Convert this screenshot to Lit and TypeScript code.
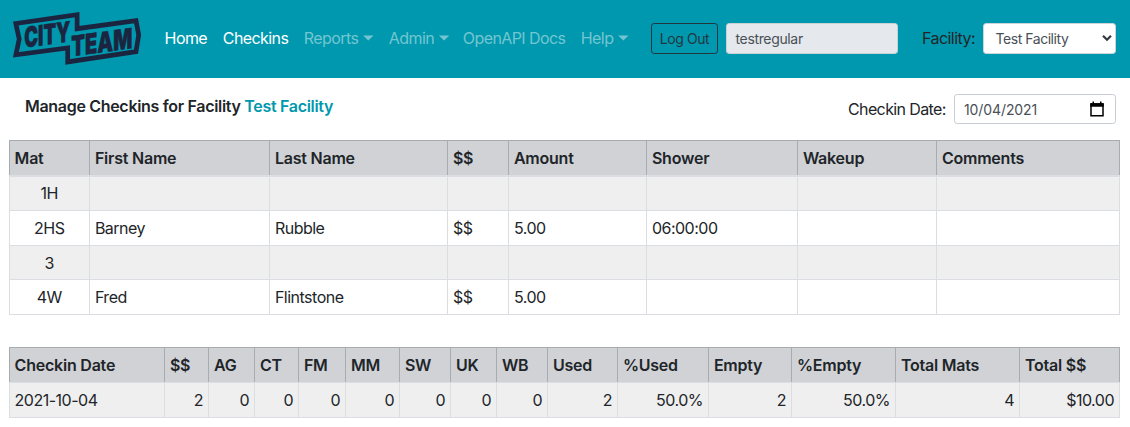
import { LitElement, html, css, svg } from "lit";
import { customElement, property } from "lit/decorators.js";

@customElement("city-logo")
class CityLogo extends LitElement {
  static styles = css`
    :host { display: block; width: 130px; height: 76px; }
    svg { display: block; overflow: visible; }
    .frame { fill: none; stroke: #1b2540; stroke-width: 4.7; stroke-linejoin: miter; }
    .word { font: 900 28px Inter, sans-serif; fill: #1b2540; stroke: #1b2540; stroke-width: 0.6; }
  `;
  render() {
    return html`<svg width="130" height="76" viewBox="12 0 130 76">
      ${svg`<path class="frame" d="M15.8 23.5 77.1 14.7V28.7L136 20.6 138.7 35 136 51.6 67.7 61.9V47.9L15.9 54.8 19.2 39Z"/>
      <text class="word" transform="matrix(1 -0.13 0 1 24.3 47.5)" x="0" y="0" textLength="46" lengthAdjust="spacingAndGlyphs">CITY</text>
      <text class="word" transform="matrix(1 -0.135 0 1 71.3 56.4)" x="0" y="0" textLength="61" lengthAdjust="spacingAndGlyphs">TEAM</text>`}
    </svg>`;
  }
}

@customElement("data-grid")
class DataGrid extends LitElement {
  @property({ attribute: false }) cols: number[] = [];
  @property({ attribute: false }) head: string[] = [];
  @property({ attribute: false }) rows: string[][] = [];
  @property({ attribute: false }) heights: number[] = [];
  @property({ reflect: true }) kind = "main";
  static styles = css`
    :host { display: block; width: 1111px; }
    .row { display: grid; box-sizing: border-box; }
    .cell {
      box-sizing: border-box; border-left: 1px solid #dadee2; border-bottom: 1px solid #dadee2;
      padding: 0 5px 0 4.9px; display: flex; align-items: center; white-space: nowrap; letter-spacing: -0.5px;
    }
    .cell:first-child { padding-left: 4.6px; }
    .cell:last-child { border-right: 1px solid #dadee2; }
    .odd { background: #efefef; }
    .head { background: #d0d2d6; border-top: 1px solid #a7acb1; font-weight: 600; }
    .head .cell { border-left-color: #a7acb1; border-bottom: 0; letter-spacing: -0.22px; }
    .head .cell:last-child { border-right-color: #a7acb1; }
    .rule { height: 1px; background: #dadee2; }
    :host([kind="main"]) .rule { height: 2px; }
    :host([kind="main"]) .row:not(.head) .cell:first-child { justify-content: center; }
    :host([kind="main"]) .rule + .odd .cell { line-height: 23px; padding-bottom: 1px; }
    :host([kind="sum"]) .row:not(.head) .cell:not(:first-child) { justify-content: flex-end; letter-spacing: -0.5px; }
  `;
  render() {
    const c = this.cols.map((n) => n + "px").join(" ");
    return html`
      <div class="row head" style="grid-template-columns:${c};height:35px">
        ${this.head.map((t) => html`<div class="cell">${t}</div>`)}
      </div>
      <div class="rule"></div>
      ${this.rows.map((r, i) => html`<div class="row ${i % 2 ? "" : "odd"}" style="grid-template-columns:${c};height:${this.heights[i]}px">
        ${r.map((t) => html`<div class="cell">${t}</div>`)}
      </div>`)}
    `;
  }
}

@customElement("app-root")
class AppRoot extends LitElement {
  static styles = css`
    :host { display: block; width: 1130px; height: 427px; overflow: hidden; background: #fff; color: #212529; font: 16px/24px Inter, sans-serif; }
    .nav { height: 78px; box-sizing: border-box; background: #0098ae; display: flex; align-items: center; padding: 0 14px 2px 12px; white-space: nowrap; }
    .links { display: flex; margin-left: 22.6px; width: 486.4px; letter-spacing: -0.58px; }
    .link { color: #73c6d1; display: flex; align-items: center; box-sizing: border-box; }
    .on { color: #fff; }
    .caret { width: 10.4px; height: 5.2px; background: currentColor; clip-path: polygon(0 0, 100% 0, 50% 100%); margin-left: 4.8px; }
    .btn, .input, .select, .date { box-sizing: border-box; height: 31px; border-radius: 3.2px; font-size: 14px; display: flex; align-items: center; }
    .btn { width: 67px; border: 1px solid #20373f; color: #20373f; justify-content: center; letter-spacing: -0.4px; padding-top: 2px; }
    .input { width: 172px; margin-left: 8px; background: #e5e8ec; border: 1px solid #cbd0d5; color: #495057; padding: 2px 9px 0 8.5px; letter-spacing: -0.35px; }
    .flabel { margin-left: 24px; width: 61px; letter-spacing: -0.55px; }
    .select { width: 133px; background: #fff; border: 1px solid #ced4da; color: #495057; padding: 0 3px 0 11.5px; justify-content: space-between; letter-spacing: -0.45px; }
    .select span { padding-top: 2px; }
    .bar { height: 62px; display: flex; padding: 0 14px 0 25px; justify-content: space-between; box-sizing: border-box; white-space: nowrap; }
    .title { padding-top: 16px; font-weight: 600; letter-spacing: -0.31px; }
    .title b { font-weight: 600; color: #0098ae; }
    .pick { display: flex; padding-top: 16px; }
    .pick .lab { width: 106px; line-height: 31px; letter-spacing: -0.62px; }
    .date { width: 162px; height: 30px; background: #fff; border: 1px solid #c8cdd3; color: #495057; padding: 0 11.5px 0 9px; justify-content: space-between; letter-spacing: -0.1px; }
    .date span { padding-top: 2px; }
    .tables { padding-left: 9px; display: flex; flex-direction: column; gap: 32px; }
    svg { display: block; }
  `;
  render() {
    const link = (t: string, w: number, on = false, drop = false) =>
      html`<a class="link ${on ? "on" : ""}" style="width:${w}px"><span>${t}</span>${drop ? html`<i class="caret"></i>` : ""}</a>`;
    return html`
      <nav class="nav">
        <city-logo></city-logo>
        <div class="links">
          ${link("Home", 58.2, true)}${link("Checkins", 81, true)}${link("Reports", 85, false, true)}
          ${link("Admin", 74, false, true)}${link("OpenAPI Docs", 118)}${link("Help", 70, false, true)}
        </div>
        <div class="btn">Log Out</div>
        <div class="input">testregular</div>
        <div class="flabel">Facility:</div>
        <div class="select"><span>Test Facility</span>
          <svg width="10" height="8" viewBox="0 0 10 8"><path d="M1 1.8 5 5.8 9 1.8" fill="none" stroke="#343a40" stroke-width="2.2"/></svg>
        </div>
      </nav>
      <div class="bar">
        <div class="title">Manage Checkins for Facility <b>Test Facility</b></div>
        <div class="pick"><div class="lab">Checkin Date:</div>
          <div class="date"><span>10/04/2021</span>
            <svg width="14" height="16" viewBox="0 0 14 16"><path d="M1 3H13V14.8H1Z" fill="none" stroke="#000" stroke-width="1.5"/><path d="M.3 2.2H13.7V5.8H.3ZM2.5.6H4V3H2.5ZM10 .6H11.5V3H10Z"/></svg>
          </div>
        </div>
      </div>
      <div class="tables">
        <data-grid kind="main" .cols=${[80, 180, 178, 61, 138, 151, 139, 184]}
          .head=${"Mat|First Name|Last Name|$$|Amount|Shower|Wakeup|Comments".split("|")}
          .heights=${[34, 35, 34, 35]}
          .rows=${[
            ["1H", "", "", "", "", "", "", ""],
            ["2HS", "Barney", "Rubble", "$$", "5.00", "06:00:00", "", ""],
            ["3", "", "", "", "", "", "", ""],
            ["4W", "Fred", "Flintstone", "$$", "5.00", "", "", ""],
          ]}></data-grid>
        <data-grid kind="sum" .cols=${[155, 44, 46, 44, 47, 54, 51, 46, 51, 70, 91, 83, 104, 124, 101]}
          .head=${"Checkin Date|$$|AG|CT|FM|MM|SW|UK|WB|Used|%Used|Empty|%Empty|Total Mats|Total $$".split("|")}
          .heights=${[35]}
          .rows=${[["2021-10-04", "2", "0", "0", "0", "0", "0", "0", "0", "2", "50.0%", "2", "50.0%", "4", "$10.00"]]}></data-grid>
      </div>
    `;
  }
}
